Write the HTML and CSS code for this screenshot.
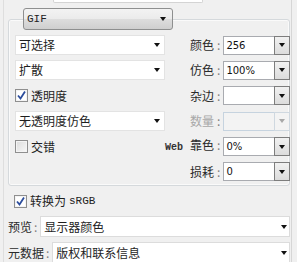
FILE: index.html
```html
<!DOCTYPE html>
<html>
<head>
<meta charset="utf-8">
<link rel="stylesheet" href="styles.css">
</head>
<body>
<div class="panel">
  <div class="topbox"></div>
  <div class="group">
    <div class="combo"><span class="mono">GIF</span><i class="arrow"></i></div>
    <div class="grid">
      <div class="drop"><span>可选择</span><i class="arrow"></i></div>
      <div class="label">颜色<span class="colon">:</span></div>
      <div class="spin"><span class="val">256</span><span class="btn"><i class="arrow"></i></span></div>

      <div class="drop"><span>扩散</span><i class="arrow"></i></div>
      <div class="label">仿色<span class="colon">:</span></div>
      <div class="spin"><span class="val">100%</span><span class="btn"><i class="arrow"></i></span></div>

      <label class="check"><span class="box on"><svg width="11" height="11" viewBox="0 0 11 11"><path d="M2 5.5 L4.5 8.5 L9 1.5" fill="none" stroke="#2b4c9c" stroke-width="1.8"/></svg></span>透明度</label>
      <div class="label">杂边<span class="colon">:</span></div>
      <div class="spin"><span class="val"></span><span class="btn"><i class="arrow"></i></span></div>

      <div class="drop"><span>无透明度仿色</span><i class="arrow"></i></div>
      <div class="label dis">数量<span class="colon">:</span></div>
      <div class="spin disabled"><span class="val"></span><span class="btn"><i class="arrow"></i></span></div>

      <label class="check"><span class="box"></span>交错</label>
      <div class="label"><span class="web">Web</span>靠色<span class="colon">:</span></div>
      <div class="spin"><span class="val">0%</span><span class="btn"><i class="arrow"></i></span></div>

      <div class="empty"></div>
      <div class="label">损耗<span class="colon">:</span></div>
      <div class="spin"><span class="val">0</span><span class="btn"><i class="arrow"></i></span></div>
    </div>
  </div>
  <label class="check srgb"><span class="box on"><svg width="11" height="11" viewBox="0 0 11 11"><path d="M2 5.5 L4.5 8.5 L9 1.5" fill="none" stroke="#2b4c9c" stroke-width="1.8"/></svg></span>转换为 <span class="mono">sRGB</span></label>
  <div class="row">
    <span class="rlabel">预览<span class="colon">:</span></span>
    <div class="drop wide"><span>显示器颜色</span><i class="arrow"></i></div>
  </div>
  <div class="row">
    <span class="rlabel">元数据<span class="colon">:</span></span>
    <div class="drop wide"><span>版权和联系信息</span><i class="arrow"></i></div>
  </div>
</div>
</body>
</html>
```
FILE: styles.css
```css
html, body {
  margin: 0;
  padding: 0;
  background: #f0f0f0;
  font-family: "Noto Sans CJK SC", "Noto Sans", sans-serif;
  font-size: 12px;
  color: #1e1e1e;
}
.panel {
  margin-left: 3px;
  width: 289px;
  height: 262px;
  border-left: 1px solid #dedede;
  border-right: 1px solid #d6d6d6;
  box-sizing: border-box;
}
.topbox {
  margin-left: 49px;
  width: 148px;
  height: 2px;
  background: #fff;
  border: 1px solid #d4d4d4;
  border-top: none;
  border-radius: 0 0 2px 2px;
}
.group {
  margin: 16px 0 0 4px;
  width: 282px;
  height: 167px;
  box-sizing: border-box;
  border: 1px solid #d5d9dc;
  border-radius: 3px;
  box-shadow: inset 0 0 0 1px #fafafa;
  padding: 0 6px;
}
.combo {
  margin: -12px 0 0 8px;
  width: 150px;
  height: 22px;
  box-sizing: border-box;
  border: 1px solid #8e8f8f;
  border-radius: 3px;
  background: linear-gradient(#f3f3f3, #ebebeb 50%, #dddddd 51%, #cfcfcf);
  display: flex;
  align-items: center;
  justify-content: space-between;
  padding: 0 6px 0 3px;
}
.mono {
  font-family: "Liberation Mono", monospace;
  font-size: 11px;
  color: #222;
}
.arrow {
  display: inline-block;
  width: 0;
  height: 0;
  border-left: 3.5px solid transparent;
  border-right: 3.5px solid transparent;
  border-top: 4px solid #111;
}
.grid {
  margin-top: 5px;
  display: grid;
  grid-template-columns: 150px 1fr 67px;
  grid-auto-rows: 20px;
  row-gap: 5.4px;
  align-items: center;
}
.drop {
  height: 20px;
  box-sizing: border-box;
  background: #fff;
  border: 1px solid #e3e3e3;
  display: flex;
  align-items: center;
  justify-content: space-between;
  padding: 0 4px 0 3px;
  line-height: 18px;
}
.label {
  text-align: right;
  padding-right: 3px;
  color: #2a2a2a;
  line-height: 20px;
  white-space: nowrap;
}
.label.dis {
  color: #a8a8a8;
}
.colon {
  color: #808080;
  margin-left: 3px;
}
.web {
  font-family: "Liberation Mono", monospace;
  font-size: 10px;
  font-weight: bold;
  color: #333;
  margin-right: 7px;
}
.spin {
  height: 19px;
  box-sizing: border-box;
  display: flex;
  background: #fff;
  border: 1px solid #a9abb0;
}
.spin .val {
  flex: 1;
  font-family: "DejaVu Sans", sans-serif;
  font-size: 10px;
  line-height: 17px;
  padding-left: 2px;
  color: #111;
}
.spin .btn {
  width: 16px;
  margin: -1px -1px -1px 0;
  box-sizing: border-box;
  border: 1px solid #7d7d7d;
  background: linear-gradient(#f1f1f1, #dcdcdc);
  display: flex;
  align-items: center;
  justify-content: center;
}
.spin.disabled {
  background: #f3f3f3;
  border-color: #c6d3df;
}
.spin.disabled .btn {
  border-color: #cfd8e0;
  background: #f3f3f3;
}
.spin.disabled .arrow {
  border-top-color: #a8a8a8;
}
.check {
  display: flex;
  align-items: center;
  gap: 3px;
  line-height: 20px;
  padding-left: 0;
}
.box {
  width: 13px;
  height: 13px;
  box-sizing: border-box;
  border: 1px solid #8f8f8f;
  background: linear-gradient(135deg, #dcdcdc, #f8f8f8);
  box-shadow: inset 0 0 0 1px #f4f4f4;
  display: flex;
  align-items: center;
  justify-content: center;
}
.box.on {
  background: #fff;
}
.srgb {
  margin: 5px 0 0 10px;
  height: 20px;
}
.row {
  display: flex;
  align-items: center;
  margin-left: 4px;
  margin-top: 5px;
  width: 282px;
}
.row + .row {
  margin-top: 5px;
}
.rlabel {
  white-space: nowrap;
  padding-right: 3px;
  color: #2a2a2a;
}
.rlabel .colon {
  margin-left: 2px;
}
.drop.wide {
  flex: 1;
  height: 21px;
  border-color: #dcdcdc;
  padding-right: 2px;
}
```
